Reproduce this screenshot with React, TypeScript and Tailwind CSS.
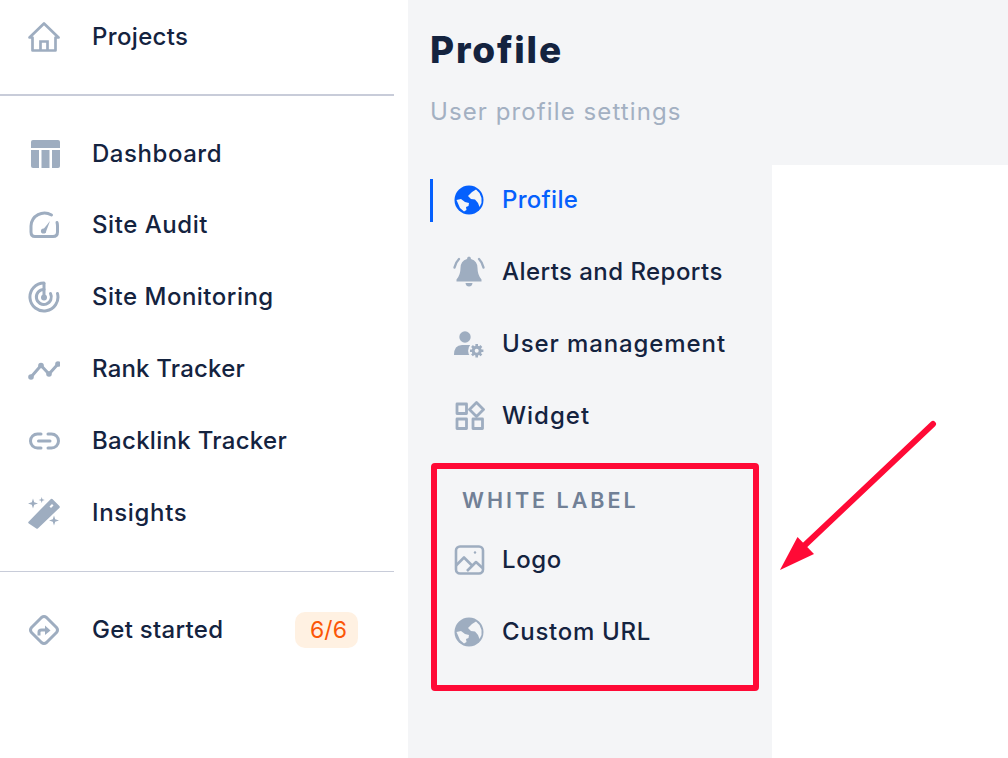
import React from 'react';

const Globe = ({ className }: { className: string }) => (
  <svg viewBox="0 0 32 32" className={`w-8 h-8 ${className}`}>
    <circle cx="16" cy="16" r="14.5" fill="currentColor" />
    <path d="M3.5 16 L8 15 L12 18 L16 19 L15.5 22 L13 23 L13.5 26 L11 27.5 L7 24 Z" fill="#f4f5f7" />
    <path d="M15 12 L19 8 L23 5.5 L26.5 9 L28.5 14 L28.5 19 L26.5 23 L25 19 L22 15.5 L18 15 Z" fill="#f4f5f7" />
  </svg>
);

const icons: Record<string, React.ReactNode> = {
  home: (
    <svg viewBox="0 0 32 32" className="w-8 h-8 text-[#9eadc0]" fill="none" stroke="currentColor" strokeWidth="2.7">
      <path d="M4.5 29.5 V16.5 H1.5 L16 2.5 L30.5 16.5 H27.5 V29.5 Z" strokeLinejoin="round" />
      <path d="M12.5 29.5 V20.5 H19.5 V29.5" />
    </svg>
  ),
  table: (
    <svg viewBox="0 0 32 32" className="w-8 h-8 text-[#9eadc0]" fill="currentColor">
      <path d="M3 4 Q3 2 5 2 H30 Q32 2 32 4 V10 H3 Z" />
      <path d="M3 12 H11 V30 H5 Q3 30 3 28 Z" />
      <path d="M13.5 12 H21.5 V30 H13.5 Z" />
      <path d="M24 12 H32 V28 Q32 30 30 30 H24 Z" />
    </svg>
  ),
  gauge: (
    <svg viewBox="0 0 32 32" className="w-8 h-8 text-[#9eadc0]" fill="none" stroke="currentColor" strokeWidth="3">
      <path d="M23.5 6 A13.5 13.5 0 0 0 3 17 V23 Q3 27.5 7 27.5 H25 Q29.5 27.5 29.5 23 V17 Q29.5 15 29 13.5" strokeLinecap="round" />
      <path d="M14 22 L22 12 L17.5 24 Z" fill="currentColor" stroke="none" />
      <circle cx="15.5" cy="22" r="2.6" fill="currentColor" stroke="none" />
    </svg>
  ),
  radar: (
    <svg viewBox="0 0 32 32" className="w-8 h-8 text-[#9eadc0]" fill="none" stroke="currentColor" strokeWidth="3">
      <path d="M16 2 A14 14 0 1 0 29.5 12.5" strokeLinecap="round" />
      <path d="M16 8.5 A7.5 7.5 0 1 0 22.5 12.5" strokeLinecap="round" />
      <path d="M16 2 V16" />
      <circle cx="16" cy="16.5" r="3" fill="currentColor" stroke="none" />
    </svg>
  ),
  trend: (
    <svg viewBox="0 0 32 32" className="w-8 h-8 text-[#9eadc0]" fill="currentColor" stroke="currentColor">
      <path d="M3 24 L13 12.5 L21 21 L30 11" fill="none" strokeWidth="3" />
      <circle cx="3" cy="24" r="2.8" strokeWidth="0" />
      <circle cx="13" cy="12.5" r="2.8" strokeWidth="0" />
      <circle cx="21" cy="21" r="2.8" strokeWidth="0" />
      <circle cx="30" cy="11" r="2.8" strokeWidth="0" />
    </svg>
  ),
  link: (
    <svg viewBox="0 0 32 32" className="w-8 h-8 text-[#9eadc0]" fill="none" stroke="currentColor" strokeWidth="3" strokeLinecap="round">
      <path d="M13 9 H9.5 A7 7 0 0 0 9.5 23 H13" />
      <path d="M20 9 H23.5 A7 7 0 0 1 23.5 23 H20" />
      <path d="M10.5 16 H22" />
    </svg>
  ),
  wand: (
    <svg viewBox="0 0 32 32" className="w-8 h-8 text-[#9eadc0]" fill="currentColor">
      <path d="M1.5 25.5 L23.5 3 L30.5 10 L9 30.5 Z" stroke="currentColor" strokeWidth="2.5" strokeLinejoin="round" />
      <path d="M25.5 8.5 L24 7 L21.5 9.5 L23 11 Z" fill="#ffffff" />
      <path d="M5 1.5 L6.2 5.3 L10 6.5 L6.2 7.7 L5 11.5 L3.8 7.7 L0 6.5 L3.8 5.3 Z" />
      <path d="M13.7 0 L14.4 2.3 L16.7 3 L14.4 3.7 L13.7 6 L13 3.7 L10.7 3 L13 2.3 Z" />
      <path d="M26 18.5 L27.2 22.3 L31 23.5 L27.2 24.7 L26 28.5 L24.8 24.7 L21 23.5 L24.8 22.3 Z" />
    </svg>
  ),
  turn: (
    <svg viewBox="0 0 32 32" className="w-8 h-8 text-[#9eadc0]" fill="none" stroke="currentColor" strokeWidth="3">
      <path d="M13.5 3.5 Q16 1.5 18.5 3.5 L28.5 13.5 Q30.5 16 28.5 18.5 L18.5 28.5 Q16 30.5 13.5 28.5 L3.5 18.5 Q1.5 16 3.5 13.5 Z" strokeLinejoin="round" />
      <path d="M11 21.5 V18 Q11 16 13.5 16 H18" />
      <path d="M17 11.5 L22.5 16.5 L17 21 Z" fill="currentColor" stroke="none" />
    </svg>
  ),
  bell: (
    <svg viewBox="0 0 32 32" className="w-8 h-8 text-[#9eadc0]" fill="currentColor">
      <path d="M16 0.5 Q18 0.5 18 3 Q24.5 5 24.5 12 Q24.5 19 28.5 23.5 V25.5 H3.5 V23.5 Q7.5 19 7.5 12 Q7.5 5 14 3 Q14 0.5 16 0.5 Z" />
      <path d="M12.5 27 H19.5 Q19 30.5 16 30.5 Q13 30.5 12.5 27 Z" />
      <path d="M6 3 Q2.5 6.5 1.5 11.5" fill="none" stroke="currentColor" strokeWidth="2.4" strokeLinecap="round" />
      <path d="M26 3 Q29.5 6.5 30.5 11.5" fill="none" stroke="currentColor" strokeWidth="2.4" strokeLinecap="round" />
    </svg>
  ),
  userCog: (
    <svg viewBox="0 0 32 32" className="w-8 h-8 text-[#9eadc0]" fill="currentColor">
      <circle cx="12" cy="9" r="5.7" />
      <path d="M1 27 Q1 17 9 17 H17 V27 Z" />
      <circle cx="23.7" cy="22.7" r="8.6" fill="#f4f5f7" />
      <path d="M23.7 16 V29.4 M17 22.7 H30.4 M19 18 L28.4 27.4 M28.4 18 L19 27.4" stroke="currentColor" strokeWidth="2.6" />
      <circle cx="23.7" cy="22.7" r="5" />
      <circle cx="23.7" cy="22.7" r="2" fill="#f4f5f7" />
    </svg>
  ),
  widget: (
    <svg viewBox="0 0 32 32" className="w-8 h-8 text-[#9eadc0]" fill="none" stroke="currentColor" strokeWidth="2.8" strokeLinejoin="round">
      <rect x="4" y="4" width="9.5" height="9.5" />
      <rect x="4" y="19" width="9.5" height="9.5" />
      <rect x="20" y="19" width="9.5" height="9.5" />
      <path d="M23.5 2.5 L30.5 9.5 L23.5 16.5 L16.5 9.5 Z" />
    </svg>
  ),
  image: (
    <svg viewBox="0 0 32 32" className="w-8 h-8 text-[#9eadc0]" fill="none" stroke="currentColor" strokeWidth="2.6" strokeLinejoin="round">
      <rect x="3" y="2.5" width="27" height="27" rx="4" />
      <path d="M3 21.5 L11 13.5 L20 22.5 M14 27 L23 18 L29.5 24" />
      <circle cx="22" cy="8.5" r="1.2" fill="currentColor" stroke="none" />
    </svg>
  ),
};

const sideTop = [
  { icon: 'table', label: 'Dashboard', track: 'tracking-[0.55px]' },
  { icon: 'gauge', label: 'Site Audit', track: 'tracking-[0.55px]' },
  { icon: 'radar', label: 'Site Monitoring', track: 'tracking-[0.5px]' },
  { icon: 'trend', label: 'Rank Tracker', track: 'tracking-[0.2px]' },
  { icon: 'link', label: 'Backlink Tracker', track: 'tracking-[0.3px]' },
  { icon: 'wand', label: 'Insights', track: 'tracking-[0.65px]' },
];

const SideRow = ({ icon, label, track }: { icon: string; label: string; track: string }) => (
  <div className="flex items-center h-[71.8px] pl-7 gap-8">
    {icons[icon]}
    <span className={`text-[24px] font-[450] text-[#14233f] ${track}`}>{label}</span>
  </div>
);

const SubRow = ({ icon, label, track }: { icon: React.ReactNode; label: string; track: string }) => (
  <div className="flex items-center h-[72px] pl-[23px] gap-[17px]">
    {icon}
    <span className={`text-[24px] font-[450] text-[#14233f] ${track}`}>{label}</span>
  </div>
);

export default function App() {
  return (
    <div className="relative flex w-[1008px] h-[758px] overflow-hidden bg-white font-['Inter',sans-serif]">
      <aside className="w-[408px] shrink-0 pt-px">
        <SideRow icon="home" label="Projects" track="tracking-[0.35px]" />
        <div className="h-0.5 bg-[#c8ccd9] mt-[21px] mb-[22px] mr-3.5" />
        {sideTop.map((item) => (
          <SideRow key={item.label} icon={item.icon} label={item.label} track={item.track} />
        ))}
        <div className="h-px bg-[#c8ccd9] mt-[22px] mb-[23px] mr-3.5" />
        <div className="flex items-center justify-between pr-[50px]">
          <SideRow icon="turn" label="Get started" track="tracking-[0.3px]" />
          <span className="flex items-center justify-center w-[63px] h-9 pl-1 rounded-[10px] bg-[#fff1e2] text-[23px] text-[#fb5607]">6/6</span>
        </div>
      </aside>
      <main className="flex-1 flex flex-col">
        <header className="h-[165px] bg-[#f4f5f7] pl-[22px] pt-[25px]">
          <h1 className="text-[37px] leading-[50px] font-extrabold tracking-[1.8px] text-[#14233f]">Profile</h1>
          <p className="mt-3 text-[24px] leading-[50px] tracking-[1.1px] text-[#a3b0c2]">User profile settings</p>
        </header>
        <div className="flex-1 flex">
          <nav className="w-[364px] bg-[#f4f5f7] pl-[22px]">
            <div className="flex items-center h-[72px] -mt-px pl-[23px] gap-[17px] relative">
              <span className="absolute left-0 top-[15px] w-[3px] h-[43px] bg-[#0560fd]" />
              <Globe className="text-[#0560fd]" />
              <span className="text-[24px] tracking-[0.3px] font-medium text-[#0560fd]">Profile</span>
            </div>
            <SubRow icon={icons.bell} label="Alerts and Reports" track="tracking-[0.45px]" />
            <SubRow icon={icons.userCog} label="User management" track="tracking-[0.9px]" />
            <SubRow icon={icons.widget} label="Widget" track="tracking-[1px]" />
            <div className="h-9" />
            <div className="pl-8 h-6 flex items-center text-[21.5px] font-semibold tracking-[3px] text-[#718096]">WHITE LABEL</div>
            <div className="h-3" />
            <SubRow icon={icons.image} label="Logo" track="tracking-[0.6px]" />
            <SubRow icon={<Globe className="text-[#9eadc0]" />} label="Custom URL" track="tracking-[0.7px]" />
          </nav>
          <div className="flex-1 bg-white" />
        </div>
      </main>
      {/* annotation on top of the screenshot */}
      <div className="absolute left-[431px] top-[463px] w-[328px] h-[228px] border-[6px] border-[#ff0a36] rounded-[4px]" />
      <svg className="absolute left-0 top-0 w-[1008px] h-[758px] pointer-events-none" viewBox="0 0 1008 758">
        <path d="M933 424 L805 545" stroke="#ff0a36" strokeWidth="6" strokeLinecap="round" />
        <path d="M780 570 L797.5 537 L814 554 Z" fill="#ff0a36" />
      </svg>
    </div>
  );
}
